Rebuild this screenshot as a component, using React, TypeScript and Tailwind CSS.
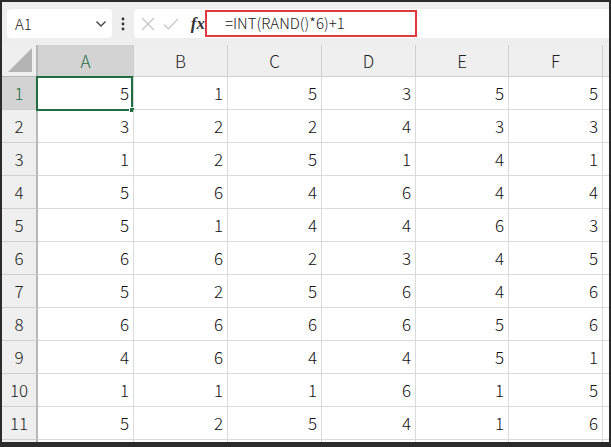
import React from "react";

const data: number[][] = [
  [5, 1, 5, 3, 5, 5],
  [3, 2, 2, 4, 3, 3],
  [1, 2, 5, 1, 4, 1],
  [5, 6, 4, 6, 4, 4],
  [5, 1, 4, 4, 6, 3],
  [6, 6, 2, 3, 4, 5],
  [5, 2, 5, 6, 4, 6],
  [6, 6, 6, 6, 5, 6],
  [4, 6, 4, 4, 5, 1],
  [1, 1, 1, 6, 1, 5],
  [5, 2, 5, 4, 1, 6],
];

const cols = ["A", "B", "C", "D", "E", "F"];

const font = { fontFamily: '"Noto Sans CJK JP", "Noto Sans", sans-serif' };

export default function App() {
  return (
    <div
      className="flex h-[447px] w-[611px] flex-col overflow-hidden border-t-2 border-r-2 border-b-[5px] border-l-2 border-[#2b2b2b] bg-white text-[#1f1f1f]"
      style={font}
    >
      {/* formula bar */}
      <div className="flex h-[43px] shrink-0 items-start bg-[#eeeeee] pt-[7px] pl-[5px]">
        <div className="flex h-[29px] w-[105px] items-center justify-between rounded-[4px] bg-white pr-[5px] pl-[8px]">
          <span className="text-[15px] leading-none font-light text-[#222]">A1</span>
          <svg width="12" height="8" viewBox="0 0 12 8">
            <path d="M1.5 1.5 L6 6 L10.5 1.5" fill="none" stroke="#444" strokeWidth="1.4" />
          </svg>
        </div>
        <div className="flex h-[29px] w-[22px] items-center justify-center">
          <svg width="4" height="14" viewBox="0 0 4 14">
            <circle cx="2" cy="2" r="1.4" fill="#333" />
            <circle cx="2" cy="7" r="1.4" fill="#333" />
            <circle cx="2" cy="12" r="1.4" fill="#333" />
          </svg>
        </div>
        <div className="flex h-[29px] flex-1 items-center rounded-l-[4px] bg-white">
          <div className="flex w-[71px] items-center pl-[6px]">
            <svg width="14" height="14" viewBox="0 0 14 14" className="ml-[1px]">
              <path d="M1 1 L13 13 M13 1 L1 13" stroke="#c4c4c4" strokeWidth="1.2" />
            </svg>
            <svg width="16" height="14" viewBox="0 0 16 14" className="ml-[8px]">
              <path d="M1 7.5 L5.5 12 L15 2" fill="none" stroke="#c4c4c4" strokeWidth="1.2" />
            </svg>
            <span
              className="ml-[12px] text-[17px] leading-none font-bold text-[#333] italic"
              style={{ fontFamily: '"Liberation Serif", serif' }}
            >
              fx
            </span>
          </div>
          <div className="flex h-[27px] w-[212px] items-center border-[2px] border-[#e0393e] pl-[18px] text-[15px] font-light text-[#222]">
            =INT(RAND()*6)+1
          </div>
        </div>
      </div>

      {/* sheet */}
      <div className="grid grid-cols-[36px_96px_94px_94px_94px_93px_94px_1fr] grid-rows-[32px_repeat(12,33px)]">
        {/* corner */}
        <div className="relative border-r-2 border-b border-[#b8b8b8] bg-[#efefef]">
          <svg className="absolute right-[4px] bottom-[4px]" width="24" height="24" viewBox="0 0 24 24">
            <path d="M24 0 L24 24 L0 24 Z" fill="#b4b4b4" />
          </svg>
        </div>
        {cols.map((c, i) => (
          <div
            key={c}
            className={`flex items-center justify-center border-r border-b border-[#cfcfcf] text-[17px] font-light ${
              i === 0 ? "border-b-[#1e6e42] bg-[#d3d3d3] text-[#1e6e42]" : "bg-[#efefef] text-[#222]"
            }`}
          >
            {c}
          </div>
        ))}
        <div className="border-b border-[#cfcfcf] bg-[#efefef]" />

        {data.map((row, r) => (
          <React.Fragment key={r}>
            <div
              className={`flex items-center justify-center border-r-2 border-b border-r-[#b8b8b8] border-b-[#cfcfcf] text-[17px] font-light ${
                r === 0 ? "bg-[#d3d3d3] text-[#1e6e42]" : "bg-[#efefef] text-[#222]"
              }`}
            >
              {r + 1}
            </div>
            {row.map((v, c) => (
              <div
                key={c}
                className="relative flex items-center justify-end border-r border-b border-[#dadada] pr-[4px] text-[17px] font-light text-[#111]"
              >
                {v}
                {r === 0 && c === 0 && (
                  <div className="absolute -top-[1px] -left-[2px] h-[35px] w-[97px] border-2 border-[#1e6e42]">
                    <div className="absolute -right-[4px] -bottom-[4px] h-[6px] w-[6px] border border-white bg-[#1e6e42]" />
                  </div>
                )}
              </div>
            ))}
            <div className="border-b border-[#dadada]" />
          </React.Fragment>
        ))}
        {/* partial row 12 */}
        <div className="border-r-2 border-[#b8b8b8] bg-[#efefef]" />
        {cols.map((c) => (
          <div key={c} className="border-r border-[#dadada]" />
        ))}
        <div />
      </div>
    </div>
  );
}
